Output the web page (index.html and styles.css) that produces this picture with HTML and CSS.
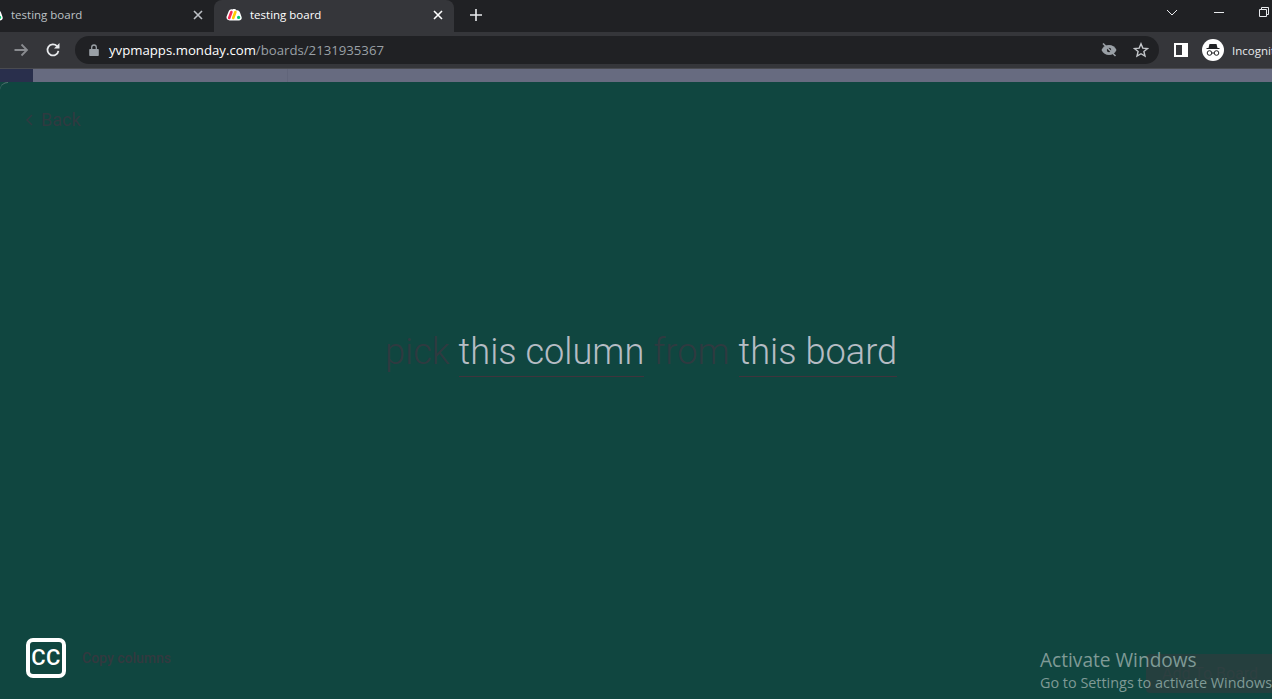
FILE: index.html
```html
<!DOCTYPE html>
<html lang="en">
<head>
    <meta charset="UTF-8">
    <title>testing board</title>
    <link rel="stylesheet" href="styles.css">
</head>
<body>
    <div class="browser">
        <div class="tabstrip">
            <div class="tab">
                <svg class="favicon" viewBox="0 0 16 16" width="16" height="16"><use href="#monday"/></svg>
                <span class="tab-title">testing board</span>
                <svg class="tab-close" viewBox="0 0 10 10" width="10" height="10"><path d="M1 1l8 8M9 1l-8 8"/></svg>
            </div>
            <div class="tab tab-active">
                <svg class="favicon" viewBox="0 0 16 16" width="16" height="16">
                    <g id="monday">
                        <path d="M3.6 13.4C1.4 13.4 0 11.4 .6 9.4L2.6 4.6C3.4 2.6 5 2 6.4 2.4 8 1.6 9.6 2 10.6 3.4 12.4 3 13.6 4.2 14 5.6L15.6 10C16.2 12 14.8 13.4 13 13.4Z" fill="#fff"/>
                        <path d="M3.2 11L5.4 5" stroke="#f62b54" stroke-width="2.6" stroke-linecap="round"/>
                        <path d="M7.2 11L9.4 5" stroke="#ffcc00" stroke-width="2.6" stroke-linecap="round"/>
                        <circle cx="12.6" cy="10.4" r="1.6" fill="#00ca72"/>
                    </g>
                </svg>
                <span class="tab-title">testing board</span>
                <svg class="tab-close" viewBox="0 0 10 10" width="10" height="10"><path d="M1 1l8 8M9 1l-8 8"/></svg>
            </div>
            <svg class="new-tab" viewBox="0 0 12 12" width="12" height="12"><path d="M6 0v12M0 6h12"/></svg>
            <div class="window-controls">
                <svg class="win-icon" viewBox="0 0 12 7" width="12" height="7"><path d="M1 1l5 5 5-5"/></svg>
                <svg class="win-icon win-min" viewBox="0 0 10 1" width="10" height="1"><path d="M0 .5h10"/></svg>
                <svg class="win-icon win-restore" viewBox="0 0 10 10" width="10" height="10"><path d="M.5 2.5h7v7h-7zM2.5 2.5v-2h7v7h-2"/></svg>
            </div>
        </div>
        <div class="toolbar">
            <svg class="nav-forward" viewBox="0 0 16 16" width="16" height="16"><path d="M1.5 8h12.5M8.5 2.5L14 8l-5.500 5.500"/></svg>
            <svg class="nav-reload" viewBox="0 0 16 16" width="16" height="16"><path d="M13.400 8.800A5.500 5.500 0 1 1 12 4.200"/><path class="solid" d="M14.500 1v5.500H9z"/></svg>
            <div class="omnibox">
                <svg class="lock" viewBox="0 0 10 12" width="10" height="12"><path d="M1 5h8a.8.8 0 0 1 .8.8v5.400a.8.8 0 0 1-.8.8H1a.8.8 0 0 1-.8-.8V5.800A.8.8 0 0 1 1 5z"/><path class="lock-bow" d="M2.700 5V3.300a2.300 2.300 0 0 1 4.600 0V5"/></svg>
                <span class="url"><span class="url-host">yvpmapps.monday.com</span>/boards/2131935367</span>
                <svg class="eye-off" viewBox="0 0 16 14" width="16" height="14"><path class="solid" d="M.5 7C2 3.800 4.800 2 8 2s6 1.800 7.500 5c-1.500 3.200-4.300 5-7.500 5S2 10.200.500 7z"/><circle cx="8" cy="7" r="2.200" fill="#202124"/><path class="slash" d="M2 .5l12.500 12.500"/></svg>
                <svg class="star" viewBox="0 0 16 16" width="16" height="16"><path d="M8 1.800l1.800 4.300 4.700.4-3.600 3 1.100 4.600L8 11.700l-4 2.400 1.100-4.600-3.600-3 4.700-.4z"/></svg>
            </div>
            <svg class="side-panel" viewBox="0 0 14 14" width="14" height="14"><path fill-rule="evenodd" d="M0 0h14v14H0zM2 2v10h6V2z"/></svg>
            <div class="profile">
                <svg class="avatar" viewBox="0 0 22 22" width="22" height="22">
                    <circle cx="11" cy="11" r="11" fill="#fff"/>
                    <path d="M7.500 5h7l1 4h2v1h-13v-1h2z" fill="#202124"/>
                    <circle cx="7.500" cy="14" r="2.300" fill="none" stroke="#202124"/>
                    <circle cx="14.500" cy="14" r="2.300" fill="none" stroke="#202124"/>
                    <path d="M9.800 14h2.400" stroke="#202124"/>
                </svg>
                <span class="profile-name">Incognito</span>
            </div>
        </div>
    </div>

    <div class="app-strip">
        <div class="strip-nav"></div>
        <div class="strip-side"></div>
        <div class="strip-main"></div>
    </div>

    <main class="panel">
        <div class="back">
            <svg class="back-arrow" viewBox="0 0 7 12" width="7" height="12"><path d="M6 1L1 6l5 5"/></svg>
            <span>Back</span>
        </div>
        <div class="sentence">
            <span class="muted">pick</span>
            <span class="pick">this column</span>
            <span class="muted">from</span>
            <span class="pick">this board</span>
        </div>
        <div class="panel-footer">
            <div class="brand">
                <div class="logo">CC</div>
                <span class="brand-name">Copy columns</span>
            </div>
            <div class="add-board">Add To Board</div>
        </div>
    </main>

    <div class="watermark">
        <div class="watermark-title">Activate Windows</div>
        <div class="watermark-sub">Go to Settings to activate Windows.</div>
    </div>
</body>
</html>
```

FILE: styles.css
```css
html, body {
    margin: 0;
    height: 699px;
    overflow: hidden;
}
body {
    position: relative;
    width: 1272px;
    display: flex;
    flex-direction: column;
    font-family: Roboto, sans-serif;
    background: #104640;
}
svg {
    display: block;
    flex: none;
}

/* browser top */
.browser {
    flex: none;
    font-family: "Open Sans", "Noto Sans", sans-serif;
}
.tabstrip {
    height: 32px;
    background: #202124;
    display: flex;
    align-items: flex-end;
    overflow: hidden;
}
.tab {
    flex: none;
    width: 247px;
    height: 32px;
    margin-left: -33px;
    box-sizing: border-box;
    padding: 0 11px 3px 20px;
    display: flex;
    align-items: center;
    color: #bdc1c6;
    font-size: 11.5px;
}
.tab-active {
    width: 240px;
    margin-left: 0;
    background: #35363a;
    border-radius: 8px 8px 0 0;
    color: #fff;
    padding: 0 11px 3px 12px;
}
.favicon {
    margin-right: 8px;
}
.tab-title {
    flex: 1;
}
.tab-close path {
    fill: none;
    stroke: currentColor;
    stroke-width: 1.6;
}
.new-tab {
    margin: 0 0 11px 16px;
}
.new-tab path {
    stroke: #e8eaed;
    stroke-width: 1.6;
}
.window-controls {
    margin-left: auto;
    margin-right: 3px;
    height: 32px;
    box-sizing: border-box;
    padding-top: 9px;
    display: flex;
    gap: 35.5px;
    align-items: flex-start;
}
.win-icon path {
    fill: none;
    stroke: #e8eaed;
}
.win-min {
    margin-top: 3px;
}
.win-restore {
    margin-top: -2px;
}
.toolbar {
    height: 36px;
    box-sizing: border-box;
    background: #35363a;
    display: flex;
    align-items: center;
    padding-left: 13px;
}
.nav-forward path {
    fill: none;
    stroke: #8a8c90;
    stroke-width: 1.8;
}
.nav-reload {
    margin-left: 16px;
}
.nav-reload path {
    fill: none;
    stroke: #e8eaed;
    stroke-width: 1.8;
}
.nav-reload .solid {
    fill: #e8eaed;
    stroke: none;
}
.omnibox {
    flex: none;
    margin-left: 14px;
    width: 1084px;
    height: 28px;
    background: #202124;
    border-radius: 14px;
    box-sizing: border-box;
    display: flex;
    align-items: center;
    padding: 0 10px 0 14px;
}
.lock path {
    fill: #9aa0a6;
}
.lock .lock-bow {
    fill: none;
    stroke: #9aa0a6;
    stroke-width: 1.3;
}
.url {
    margin-left: 10px;
    flex: 1;
    font-size: 13.2px;
    color: #9aa0a6;
}
.url-host {
    color: #fff;
}
.eye-off {
    margin-right: 16px;
}
.eye-off .solid {
    fill: #9aa0a6;
}
.eye-off .slash {
    stroke: #9aa0a6;
    stroke-width: 1.6;
}
.star path {
    fill: none;
    stroke: #c4c7cb;
    stroke-width: 1.4;
}
.side-panel {
    margin-left: 15px;
    fill: #fff;
}
.profile {
    flex: none;
    margin-left: 14px;
    display: flex;
    align-items: center;
    gap: 8px;
    color: #e8eaed;
    font-size: 11.5px;
    white-space: nowrap;
}

/* monday page behind the modal */
.app-strip {
    flex: none;
    height: 14px;
    display: flex;
    border-top: 1px solid #4a4b50;
    box-sizing: border-box;
}
.strip-nav {
    width: 33px;
    background: #292f4c;
}
.strip-side {
    width: 254px;
    background: #676b80;
    border-right: 1px solid #61657a;
}
.strip-main {
    flex: 1;
    background: #676b80;
}

/* modal */
.panel {
    flex: 1;
    position: relative;
    display: flex;
    flex-direction: column;
}
.panel::before {
    content: "";
    position: absolute;
    left: 0;
    top: 0;
    width: 8px;
    height: 8px;
    border-top: 1px solid #54736f;
    border-top-left-radius: 8px;
}
.back {
    margin: 28px 0 0 26px;
    height: 20px;
    display: flex;
    align-items: center;
    gap: 8px;
    font-size: 18px;
    line-height: 20px;
    color: #2f3a40;
}
.back-arrow path {
    fill: none;
    stroke: #2f3a40;
    stroke-width: 1.5;
}
.sentence {
    margin-top: 201px;
    padding-left: 385px;
    display: flex;
    gap: 9px;
    font-size: 36.2px;
    line-height: 42px;
    font-weight: 300;
    white-space: nowrap;
}
.muted {
    color: #2f3a40;
    height: 42px;
}
.pick {
    color: #b6bcc4;
    border-bottom: 1px solid #40343c;
    padding-bottom: 3px;
}
.panel-footer {
    margin-top: auto;
    padding: 0 0 6px 26px;
    display: flex;
    justify-content: space-between;
    align-items: flex-end;
}
.brand {
    display: flex;
    align-items: center;
    gap: 16px;
    margin-bottom: 15px;
}
.logo {
    width: 40px;
    height: 40px;
    box-sizing: border-box;
    border: 4px solid #fff;
    border-radius: 7px;
    color: #fff;
    font-size: 22px;
    letter-spacing: 0.5px;
    line-height: 32px;
    font-weight: 500;
    text-align: center;
}
.brand-name {
    font-size: 14px;
    font-weight: 500;
    color: #33393f;
}
.add-board {
    width: 126px;
    height: 39px;
    box-sizing: border-box;
    padding-left: 16px;
    background: #253f3e;
    border-radius: 4px 0 0 4px;
    color: #2e3f41;
    font-size: 16px;
    line-height: 39px;
    white-space: nowrap;
}

/* windows activation watermark */
.watermark {
    position: absolute;
    left: 1040px;
    top: 648px;
    color: #7f9a96;
    font-family: "Open Sans", "Noto Sans", sans-serif;
    white-space: nowrap;
}
.watermark-title {
    font-size: 19.1px;
    line-height: 24px;
}
.watermark-sub {
    font-size: 14.4px;
    line-height: 22px;
}
```
